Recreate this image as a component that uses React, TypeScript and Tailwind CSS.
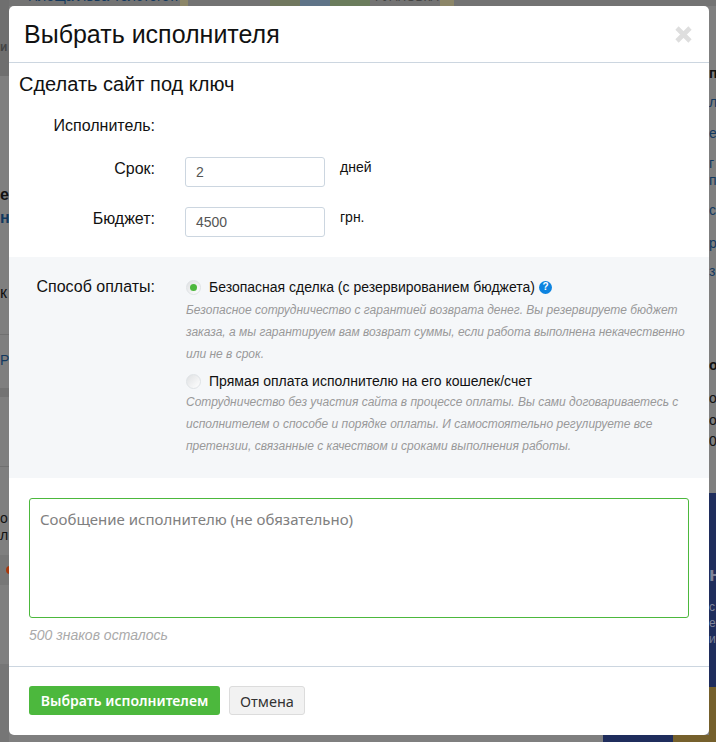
function Row({ label, value, unit }: { label: string; value: string; unit: string }) {
    return (
        <div className="flex h-[30px] gap-[15px]">
            <div className="w-[146px] text-right text-[16px] leading-[24px] text-[#111]">{label}</div>
            <div className="ml-[15px] h-[30px] w-[140px] rounded-[3px] border border-[#ccd6e0] bg-white px-[10px] text-[14px] leading-[28px] text-[#555]">
                {value}
            </div>
            <div className="text-[14px] leading-[20px] text-[#111]">{unit}</div>
        </div>
    );
}

function Radio({ checked }: { checked?: boolean }) {
    return (
        <span className="flex h-[15px] w-[15px] shrink-0 items-center justify-center rounded-full border border-[#dfe3e6] bg-gradient-to-br from-[#dfe1e3] to-white">
            {checked && <span className="h-[7px] w-[7px] rounded-full bg-[#4cb83d]" />}
        </span>
    );
}

// the page under the overlay, only its edges stay visible
function PageBehind() {
    return (
        <div className="flex h-[742px] w-[716px] overflow-hidden bg-[#7f7f7f] text-[14px] leading-[18px] text-[#111]">
            <div className="flex w-[9px] shrink-0 flex-col overflow-hidden">
                <div className="h-[76px] bg-[#6f6f6f] pt-[38px] text-[12px] font-bold text-[#444]">и</div>
                <div className="h-[110px]" />
                <div className="h-[23px] text-[16px] font-bold">е</div>
                <div className="h-[75px] text-[16px] font-bold text-[#12395f]">н</div>
                <div className="h-[50px] text-[16px]">к</div>
                <div className="h-[17px] border-t border-[#707070]" />
                <div className="h-[37px] text-[#12395f]">Р</div>
                <div className="h-[9px] bg-[#737373]" />
                <div className="h-[70px] border-b border-[#707070]" />
                <div className="h-[42px]" />
                <div className="h-[17px]">о</div>
                <div className="h-[29px]">л</div>
                <div className="flex h-[30px] items-center bg-[#777] pl-[6px]">
                    <span className="h-[8px] w-[8px] shrink-0 rounded-full bg-[#a8380c]" />
                </div>
                <div className="h-[79px]" />
                <div className="h-[78px] bg-[#767676]" />
            </div>

            <div className="flex flex-1 flex-col justify-between">
                <div className="flex h-[6px] overflow-hidden bg-[#737373]">
                    <div className="-mt-[13px] h-[19px] w-[171px] whitespace-nowrap pl-[19px] text-[#12395f]">Площа Льва Толстого…</div>
                    <div className="w-[8px] bg-[#8c8668]" />
                    <div className="w-[82px]" />
                    <div className="w-[30px] bg-[#71785f]" />
                    <div className="w-[30px] bg-[#5f7488]" />
                    <div className="w-[40px] bg-[#6b7c5c]" />
                    <div className="-mt-[12px] h-[18px] w-[70px] whitespace-nowrap pl-[5px] text-[12px] text-[#444]">РУАНОВКА</div>
                    <div className="w-[14px] bg-[#8c8668]" />
                </div>
                <div className="flex h-[7px]">
                    <div className="w-[594px]" />
                    <div className="w-[70px] bg-[#1f2d5c]" />
                    <div className="w-[36px] bg-[#75602c]" />
                </div>
            </div>

            <div className="flex w-[7px] shrink-0 flex-col overflow-hidden text-[#12395f]">
                <div className="h-[6px] shrink-0 bg-[#737373]" />
                <div className="h-[58px] shrink-0" />
                <div className="h-[29px] shrink-0 font-bold text-[#111]">п</div>
                <div className="h-[31px] shrink-0">л</div>
                <div className="h-[30px] shrink-0">е</div>
                <div className="h-[17px] shrink-0">г</div>
                <div className="h-[30px] shrink-0">п</div>
                <div className="h-[33px] shrink-0">с</div>
                <div className="h-[28px] shrink-0">р</div>
                <div className="h-[94px] shrink-0">з</div>
                <div className="h-[33px] shrink-0 font-bold text-[#111]">о</div>
                <div className="h-[22px] shrink-0 text-[#111]">о</div>
                <div className="h-[21px] shrink-0 text-[#111]">о</div>
                <div className="h-[61px] shrink-0 text-[#111]">0.</div>
                <div className="flex shrink-0 flex-col bg-[#1f2d5c] text-[#7f8499]">
                    <div className="h-[72px]" />
                    <div className="h-[33px] text-[20px] font-bold">н</div>
                    <div className="h-[16px] text-[12px]">с</div>
                    <div className="h-[16px] text-[12px]">е</div>
                    <div className="h-[57px] text-[12px]">и</div>
                </div>
                <div className="h-[55px] shrink-0 bg-[#75602c]" />
            </div>
        </div>
    );
}

export default function App() {
    return (
        <div className="relative h-[742px] w-[716px] overflow-hidden font-['Liberation_Sans',Arial,sans-serif]">
            <PageBehind />
            <div className="absolute left-[9px] top-[6px] h-[729px] w-[700px] rounded-[5px] bg-white">
                <div className="flex h-[57px] items-center justify-between border-b border-[#ccd6e0] pl-[15px] pr-[17px]">
                    <h1 className="text-[25px] leading-[26px] text-[#111]">Выбрать исполнителя</h1>
                    <svg width="17" height="17" viewBox="0 0 17 17" className="mt-[1px]">
                        <path d="M2 2 L15 15 M15 2 L2 15" stroke="#dedede" strokeWidth="4.6" />
                    </svg>
                </div>
                <div className="pl-[10px] pt-[10px]">
                    <h2 className="text-[20px] leading-[22px] text-[#111]">Сделать сайт под ключ</h2>
                </div>
                <div className="mt-[21px] flex flex-col gap-[20px]">
                    <div className="h-[21px] w-[146px] text-right text-[16px] leading-[20px] text-[#111]">Исполнитель:</div>
                    <Row label="Срок:" value="2" unit="дней" />
                    <Row label="Бюджет:" value="4500" unit="грн." />
                </div>
                <div className="mt-[20px] flex h-[221px] gap-[31px] bg-[#f5f7f9] pt-[20px]">
                    <div className="w-[146px] text-right text-[16px] leading-[20px] text-[#111]">Способ оплаты:</div>
                    <div className="w-[510px]">
                        <div className="flex items-center gap-[8px] text-[14px] leading-[20px] text-[#111]">
                            <Radio checked />
                            <span>Безопасная сделка (с резервированием бюджета)</span>
                            <span className="-ml-[4px] flex h-[13px] w-[13px] items-center justify-center rounded-full bg-[#0d84e0] text-[10px] font-bold leading-none text-white">?</span>
                        </div>
                        <p className="mt-[2px] text-[12px] italic leading-[22px] text-[#999]">
                            Безопасное сотрудничество с гарантией возврата денег. Вы резервируете бюджет заказа, а мы гарантируем вам возврат суммы, если работа выполнена некачественно или не в срок.
                        </p>
                        <div className="mt-[6px] flex items-center gap-[8px] text-[14px] leading-[20px] text-[#111]">
                            <Radio />
                            <span>Прямая оплата исполнителю на его кошелек/счет</span>
                        </div>
                        <p className="text-[12px] italic leading-[22px] text-[#999]">
                            Сотрудничество без участия сайта в процессе оплаты. Вы сами договариваетесь с исполнителем о способе и порядке оплаты. И самостоятельно регулируете все претензии, связанные с качеством и сроками выполнения работы.
                        </p>
                    </div>
                </div>
                <div className="px-[20px] pt-[20px]">
                    <div className="h-[120px] rounded-[3px] border border-[#4cb83d] px-[10px] py-[10px] font-['Noto_Sans',sans-serif] text-[15px] leading-[20px] text-[#808080]">
                        Сообщение исполнителю (не обязательно)
                    </div>
                    <div className="mt-[7px] text-[14px] italic leading-[20px] text-[#aaa]">500 знаков осталось</div>
                </div>
                <div className="mt-[21px] flex items-start gap-[9px] border-t border-[#ccd6e0] px-[20px] pt-[19px] font-['Noto_Sans',sans-serif] leading-[20px]">
                    <button className="h-[29px] w-[191px] rounded-[3px] bg-[#4cb83d] text-[14px] font-semibold text-white">Выбрать исполнителем</button>
                    <button className="h-[29px] w-[76px] rounded-[3px] border border-[#dcdcdc] bg-[#f2f2f2] text-[14.5px] text-[#333]">Отмена</button>
                </div>
            </div>
        </div>
    );
}
